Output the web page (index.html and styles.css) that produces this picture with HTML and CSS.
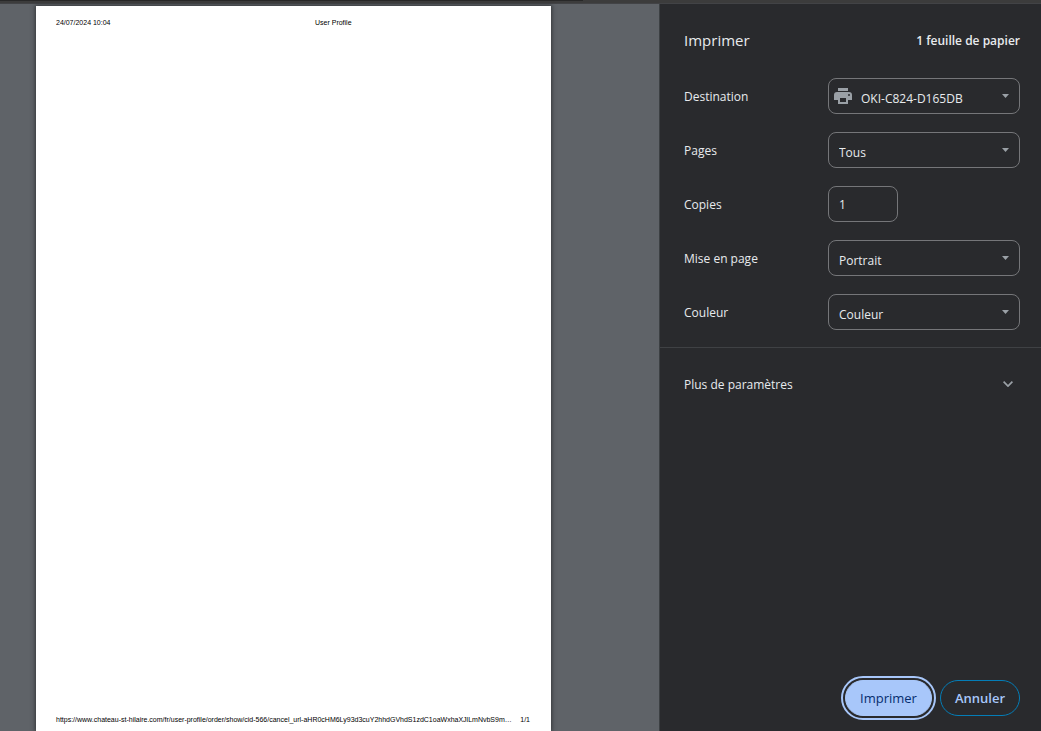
FILE: index.html
```html
<!DOCTYPE html>
<html lang="fr">
<head>
  <meta charset="utf-8">
  <title>Imprimer</title>
  <link rel="stylesheet" href="styles.css">
</head>
<body>
  <div class="window-edge"><div class="window-edge-shade"></div></div>
  <div class="print-dialog">
    <main class="preview">
      <article class="sheet">
        <header class="sheet-header">
          <span>24/07/2024 10:04</span>
          <span class="sheet-title">User Profile</span>
        </header>
        <footer class="sheet-footer">
          <span>https://www.chateau-st-hilaire.com/fr/user-profile/order/show/cid-566/cancel_url-aHR0cHM6Ly93d3cuY2hhdGVhdS1zdC1oaWxhaXJlLmNvbS9m…</span>
          <span>1/1</span>
        </footer>
      </article>
    </main>
    <form class="sidebar">
      <header class="sidebar-header">
        <h1 class="title">Imprimer</h1>
        <span class="sheet-count">1 feuille de papier</span>
      </header>
      <div class="settings">
        <div class="row">
          <label for="destination">Destination</label>
          <div class="control">
            <select id="destination" class="field with-icon"><option>OKI-C824-D165DB</option></select>
            <svg class="printer" viewBox="0 0 18 16" aria-hidden="true"><path fill="#9aa0a6" fill-rule="evenodd" d="M4 0h10v3H4zM3 4h12a3 3 0 0 1 3 3v5h-4v4H4v-4H0V7a3 3 0 0 1 3-3zm3 6v4h6v-4zm9-4a1 1 0 1 0 0 2 1 1 0 0 0 0-2z"/></svg>
            <svg class="caret" viewBox="0 0 8 4" aria-hidden="true"><path fill="#9aa0a6" d="M0 0h7L3.500 4z"/></svg>
          </div>
        </div>
        <div class="row">
          <label for="pages">Pages</label>
          <div class="control">
            <select id="pages" class="field"><option>Tous</option></select>
            <svg class="caret" viewBox="0 0 8 4" aria-hidden="true"><path fill="#9aa0a6" d="M0 0h7L3.500 4z"/></svg>
          </div>
        </div>
        <div class="row">
          <label for="copies">Copies</label>
          <div class="control">
            <input id="copies" class="field copies" type="text" inputmode="numeric" value="1">
          </div>
        </div>
        <div class="row">
          <label for="layout">Mise en page</label>
          <div class="control">
            <select id="layout" class="field"><option>Portrait</option></select>
            <svg class="caret" viewBox="0 0 8 4" aria-hidden="true"><path fill="#9aa0a6" d="M0 0h7L3.500 4z"/></svg>
          </div>
        </div>
        <div class="row">
          <label for="color">Couleur</label>
          <div class="control">
            <select id="color" class="field"><option>Couleur</option></select>
            <svg class="caret" viewBox="0 0 8 4" aria-hidden="true"><path fill="#9aa0a6" d="M0 0h7L3.500 4z"/></svg>
          </div>
        </div>
      </div>
      <button type="button" class="more" aria-expanded="false">
        <span>Plus de paramètres</span>
        <svg class="chevron" viewBox="0 0 10 6" aria-hidden="true"><path fill="none" stroke="#9aa0a6" stroke-width="1.7" d="M.6.7 5 5.1 9.4.7"/></svg>
      </button>
      <footer class="actions">
        <button type="submit" class="button primary">Imprimer</button>
        <button type="button" class="button">Annuler</button>
      </footer>
    </form>
  </div>
</body>
</html>
```
FILE: styles.css
```css
* {
  box-sizing: border-box;
}

body {
  margin: 0;
  height: 100vh;
  display: flex;
  flex-direction: column;
  overflow: hidden;
  background: #292a2d;
  color: #e8eaed;
  font: 13px/20px "Open Sans", "Noto Sans", sans-serif;
}

.window-edge {
  flex: none;
  height: 4px;
  background: #3c3c3c;
  border-bottom: 1px solid #424346;
}

.window-edge-shade {
  width: 56%;
  height: 1px;
  background: #282828;
}

.print-dialog {
  flex: 1;
  min-height: 0;
  display: flex;
}

.preview {
  flex: 1;
  min-width: 0;
  display: flex;
  padding: 2px 108px 0 36px;
  background: #5f6368;
}

.sheet {
  flex: 1;
  min-width: 0;
  display: flex;
  flex-direction: column;
  justify-content: space-between;
  padding: 12px 21px 7px 20px;
  background: #fff;
  box-shadow: 0 0 4px 1px #35373a;
  color: #000;
  font: 7px/9px "Liberation Sans", Arial, sans-serif;
}

.sheet-header {
  display: grid;
  grid-template-columns: 259px 1fr;
}

.sheet-footer {
  display: flex;
  justify-content: space-between;
  white-space: nowrap;
}

.sidebar {
  flex: none;
  width: 382px;
  display: flex;
  flex-direction: column;
  border-left: 1px solid #3c4043;
}

.sidebar-header {
  display: flex;
  align-items: center;
  justify-content: space-between;
  height: 73px;
  padding: 0 21px 0 24px;
}

.title {
  margin: 0;
  padding-bottom: 2px;
  font-size: 15px;
  font-weight: 400;
}

.sheet-count {
  font-size: 12px;
  font-weight: 600;
}

.settings {
  display: grid;
  gap: 18px;
  padding: 1px 21px 17px 24px;
  border-bottom: 1px solid #3f4144;
}

.row {
  display: grid;
  grid-template-columns: 1fr 192px;
  align-items: center;
  font-size: 12px;
}

.row label,
.more span {
  padding-top: 2px;
}

.control {
  position: relative;
  display: flex;
}

.field {
  appearance: none;
  width: 100%;
  height: 36px;
  margin: 0;
  padding: 6px 24px 0 10px;
  border: 1px solid #757679;
  border-radius: 8px;
  background: transparent;
  color: #e8eaed;
  font: 12px/20px "Open Sans", "Noto Sans", sans-serif;
}

.with-icon {
  padding-left: 32px;
}

.copies {
  width: 70px;
  padding: 0 10px;
}

.printer {
  position: absolute;
  top: 10px;
  left: 6px;
  width: 18px;
  height: 16px;
  pointer-events: none;
}

.caret {
  position: absolute;
  top: 16px;
  right: 10px;
  width: 8px;
  height: 4px;
  pointer-events: none;
}

.more {
  display: flex;
  align-items: center;
  justify-content: space-between;
  height: 72px;
  padding: 0 28px 0 24px;
  border: 0;
  background: transparent;
  color: #e8eaed;
  font: inherit;
  font-size: 12px;
}

.chevron {
  width: 10px;
  height: 6px;
}

.actions {
  display: flex;
  justify-content: flex-end;
  gap: 8px;
  margin-top: auto;
  padding: 0 21px 15px;
}

.button {
  height: 36px;
  padding: 0 14px;
  border: 1px solid #047db7;
  border-radius: 18px;
  background: transparent;
  color: #a8c7fa;
  font: 600 13px/20px "Open Sans", "Noto Sans", sans-serif;
}

.primary {
  border-color: #a8c7fa;
  background: #a8c7fa;
  color: #062e6f;
  font-weight: 500;
  outline: 2px solid #a8c7fa;
  outline-offset: 2px;
}
```
